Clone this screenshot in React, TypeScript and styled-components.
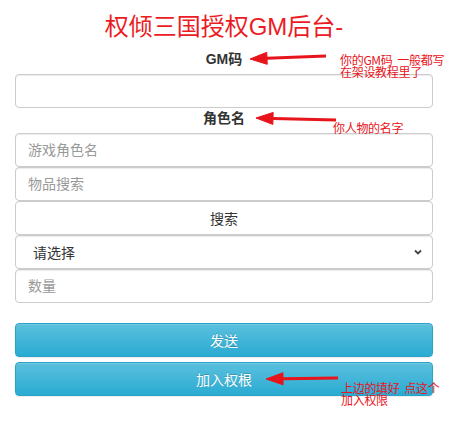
import React from 'react'
import styled, { createGlobalStyle } from 'styled-components'

const GlobalStyle = createGlobalStyle`
    html, body {
        margin: 0;
        padding: 0;
        background: #fff;
    }
    body {
        font-family: "Liberation Sans", "Noto Sans CJK SC", sans-serif;
        font-size: 14px;
        color: #333;
    }
`

const Page = styled.div`
    position: relative;
    width: 453px;
    height: 421px;
    overflow: hidden;
`

const Container = styled.div`
    padding: 12px 20px 0 15px;
    display: flex;
    flex-direction: column;
`

const Title = styled.h1`
    margin: 0 0 7px;
    font-size: 24px;
    line-height: 30px;
    font-weight: normal;
    text-align: center;
    color: #ec1c24;
    font-family: "Liberation Sans", "Noto Sans CJK SC", sans-serif;
`

const Label = styled.label`
    display: block;
    text-align: center;
    font-weight: bold;
    font-size: 14px;
    line-height: 20px;
    margin-bottom: 5px;
    color: #333;
    font-family: "Liberation Sans", "Noto Sans CJK SC", sans-serif;
`

const Stack = styled.div`
    display: flex;
    flex-direction: column;
`

const Input = styled.input`
    box-sizing: border-box;
    width: 100%;
    height: 34px;
    margin: 0;
    padding: 6px 12px;
    font-size: 14px;
    font-family: "Liberation Sans", "Noto Sans CJK SC", sans-serif;
    color: #555;
    border: 1px solid #ccc;
    border-radius: 4px;
    background: #fff;
    box-shadow: inset 0 1px 1px rgba(0, 0, 0, .075);
    outline: none;
    &::placeholder {
        color: #999;
    }
`

const PlainButton = styled.button`
    box-sizing: border-box;
    width: 100%;
    height: 34px;
    margin: 0;
    font-size: 14px;
    font-family: "Liberation Sans", "Noto Sans CJK SC", sans-serif;
    color: #333;
    border: 1px solid #ccc;
    border-radius: 4px;
    background: #fff;
`

const SelectBox = styled.div`
    box-sizing: border-box;
    height: 34px;
    display: flex;
    align-items: center;
    justify-content: space-between;
    padding: 0 8px 0 17px;
    border: 1px solid #ccc;
    border-radius: 4px;
    box-shadow: inset 0 1px 1px rgba(0, 0, 0, .075);
    font-family: "Liberation Sans", "Noto Sans CJK SC", sans-serif;
    font-size: 14px;
    color: #333;
`

const InfoButton = styled.button<{ $gap: number }>`
    box-sizing: border-box;
    width: 100%;
    height: 34px;
    margin: ${p => p.$gap}px 0 0;
    font-size: 14px;
    font-family: "Liberation Sans", "Noto Sans CJK SC", sans-serif;
    color: #fff;
    border: 1px solid #28a4c9;
    border-radius: 4px;
    background-image: linear-gradient(to bottom, #5bc0de 0, #2aabd2 100%);
    box-shadow: inset 0 1px 0 rgba(255, 255, 255, .15), 0 1px 1px rgba(0, 0, 0, .075);
    text-shadow: 0 -1px 0 rgba(0, 0, 0, .2);
`

const Overlay = styled.svg`
    position: absolute;
    left: 0;
    top: 0;
    pointer-events: none;
`

const Note = styled.div<{ $x: number; $y: number }>`
    position: absolute;
    left: ${p => p.$x}px;
    top: ${p => p.$y}px;
    color: #e8141c;
    font-size: 12px;
    line-height: 12px;
    white-space: pre;
    font-family: "Noto Sans CJK SC", sans-serif;
    letter-spacing: -0.3px;
`

interface ArrowProps {
    x1: number;
    y1: number;
    x2: number;
    y2: number;
}

// tail (x1,y1) -> tip (x2,y2)
const Arrow = ({ x1, y1, x2, y2 }: ArrowProps) => {
    const dx = x2 - x1
    const dy = y2 - y1
    const len = Math.hypot(dx, dy)
    const ux = dx / len
    const uy = dy / len
    const bx = x2 - ux * 17
    const by = y2 - uy * 17
    const px = -uy * 6
    const py = ux * 6
    return (
        <g fill="#e8141c" stroke="#e8141c">
            <line x1={x1} y1={y1} x2={bx} y2={by} strokeWidth={3} />
            <polygon
                points={`${x2},${y2} ${bx + px},${by + py} ${bx - px},${by - py}`}
                strokeWidth={1}
                strokeLinejoin="round"
            />
        </g>
    )
}

const Chevron = () => (
    <svg width="12" height="12" viewBox="0 0 12 12">
        <path d="M3 4.5 L6 7.5 L9 4.5" fill="none" stroke="#444" strokeWidth="1.8" />
    </svg>
)

const App = () => {
    return (
        <Page>
            <GlobalStyle />
            <Container>
                <Title>权倾三国授权GM后台-</Title>
                <Label>GM码</Label>
                <Input type="text" />
                <Label>角色名</Label>
                <Stack>
                    <Input type="text" placeholder="游戏角色名" />
                    <Input type="text" placeholder="物品搜索" />
                    <PlainButton>搜索</PlainButton>
                    <SelectBox>
                        <span>请选择</span>
                        <Chevron />
                    </SelectBox>
                    <Input type="text" placeholder="数量" />
                </Stack>
                <InfoButton $gap={20}>发送</InfoButton>
                <InfoButton $gap={5}>加入权根</InfoButton>
            </Container>

            <Overlay width="453" height="421">
                <Arrow x1={326} y1={56} x2={250} y2={59} />
                <Arrow x1={336} y1={120} x2={256} y2={118} />
                <Arrow x1={338} y1={378} x2={266} y2={379} />
            </Overlay>
            <Note $x={340} $y={54}>{'你的GM码  一般都写\n在架设教程里了'}</Note>
            <Note $x={333} $y={122}>你人物的名字</Note>
            <Note $x={341} $y={382}>{'上边的填好  点这个\n加入权限'}</Note>
        </Page>
    )
}

export default App
